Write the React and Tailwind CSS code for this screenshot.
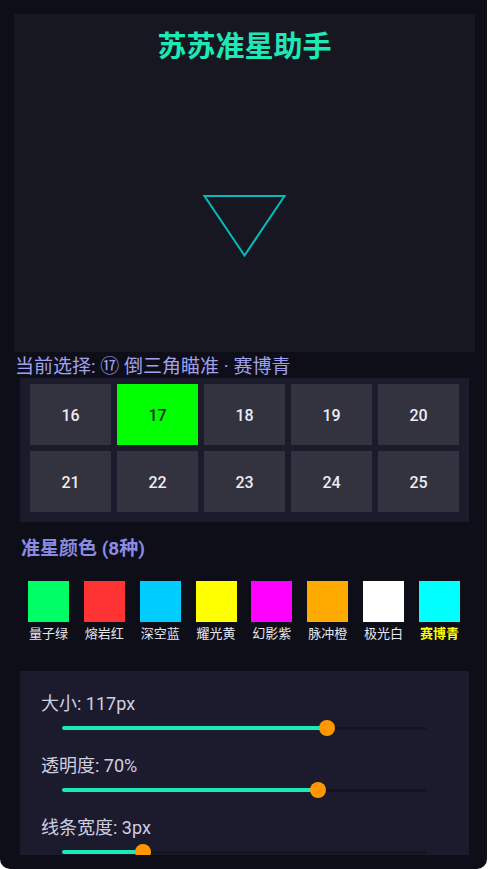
import React from "react";

const FONT = { fontFamily: 'Roboto, "Noto Sans CJK SC", "Noto Sans", sans-serif' };

const colors = [
  { name: "量子绿", c: "#00ff66" },
  { name: "熔岩红", c: "#ff3333" },
  { name: "深空蓝", c: "#00ccff" },
  { name: "耀光黄", c: "#ffff00" },
  { name: "幻影紫", c: "#ff00ff" },
  { name: "脉冲橙", c: "#ffaa00" },
  { name: "极光白", c: "#ffffff" },
  { name: "赛博青", c: "#00ffff", selected: true },
];

const sliders = [
  { label: "大小: 117px", frac: 0.725 },
  { label: "透明度: 70%", frac: 0.7 },
  { label: "线条宽度: 3px", frac: 0.2225 },
];

function Slider({ label, frac }) {
  return (
    <div className="mb-[18px]">
      <div className="text-[18px] leading-[24px] text-[#cfcfe2] whitespace-nowrap">{label}</div>
      <div className="relative mt-[4px] h-[16px] mx-[21px]">
        <div className="absolute left-0 right-0 top-[7px] h-[3px] bg-[#15151f]" />
        <div
          className="absolute left-0 top-[6px] h-[4px] bg-[#1de9b6] rounded-full"
          style={{ width: `${frac * 100}%` }}
        />
        <div
          className="absolute top-0 w-[16px] h-[16px] -ml-[8px] rounded-full bg-[#ff9800]"
          style={{ left: `${frac * 100}%` }}
        />
      </div>
    </div>
  );
}

export default function App() {
  const nums = Array.from({ length: 25 }, (_, i) => i + 1);
  return (
    <div className="w-full min-h-[869px] bg-white" style={FONT}>
      <div className="w-[487px] h-[869px] bg-[#0d0e17] rounded-b-[10px] p-[14px] pr-[12px]">
        <div className="h-[841px] overflow-hidden">
          {/* canvas */}
          <div className="relative w-[461px] h-[338px] bg-[#161720]">
            <div className="pt-[15px] text-center text-[29px] leading-[36px] font-bold text-[#1de9b6]">
              苏苏准星助手
            </div>
            <svg className="absolute inset-0" width="461" height="338" viewBox="0 0 461 338">
              <polygon
                points="190.5,182 270.5,182 230.5,241.5"
                fill="none"
                stroke="#00ffff"
                strokeOpacity="0.7"
                strokeWidth="2"
                strokeLinejoin="miter"
              />
            </svg>
          </div>

          <div className="h-[26px] leading-[30px] text-[19px] text-[#a0a0ec] pl-[1px] whitespace-nowrap">
            当前选择: ⑰ 倒三角瞄准 · 赛博青
          </div>

          {/* grid panel */}
          <div className="ml-[6px] w-[449px] h-[144px] bg-[#1b1b2b] overflow-hidden flex flex-col justify-end">
            <div className="grid grid-cols-5 gap-[6px] px-[10px] pb-[10px]">
              {nums.map((n) => (
                <div
                  key={n}
                  className={
                    n === 17
                      ? "h-[61px] flex items-center justify-center pt-[2px] bg-[#00ff00] text-[#2a2a2a] text-[16px] font-medium"
                      : "h-[61px] flex items-center justify-center pt-[2px] bg-[#33323f] text-[#ececf4] text-[16px] font-medium"
                  }
                >
                  {n}
                </div>
              ))}
            </div>
          </div>

          {/* colors */}
          <div className="ml-[6px] w-[449px]">
            <div className="mt-[15px] pl-[1px] text-[19px] leading-[24px] font-bold text-[#8b8be4] whitespace-nowrap">
              准星颜色 (8种)
            </div>
            <div className="mt-[20px] pl-[8px] pr-[9px] flex justify-between">
              {colors.map((c) => (
                <div key={c.name} className="flex flex-col items-center w-[41px]">
                  <div className="w-[41px] h-[41px]" style={{ backgroundColor: c.c }} />
                  <div
                    className={
                      c.selected
                        ? "mt-[3px] text-[13px] leading-[18px] whitespace-nowrap font-bold text-[#ffff00]"
                        : "mt-[3px] text-[13px] leading-[18px] whitespace-nowrap text-[#e6e6ee]"
                    }
                  >
                    {c.name}
                  </div>
                </div>
              ))}
            </div>
          </div>

          {/* sliders */}
          <div className="mt-[28px] ml-[6px] w-[449px] bg-[#1b1b2d] pt-[21px] px-[21px] pb-[10px]">
            {sliders.map((s) => (
              <Slider key={s.label} {...s} />
            ))}
          </div>
        </div>
      </div>
    </div>
  );
}
